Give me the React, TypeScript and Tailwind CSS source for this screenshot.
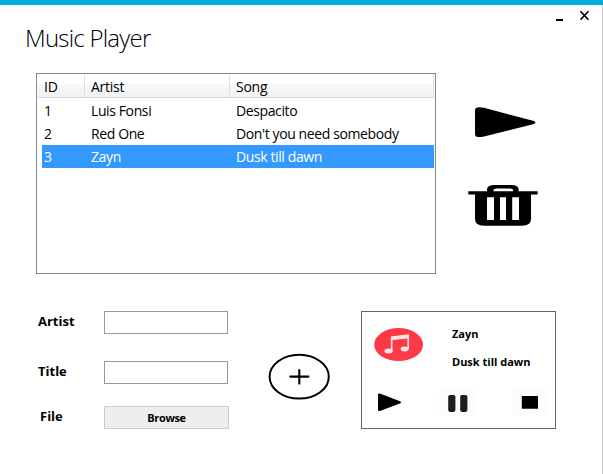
import React from "react";

const songs = [
  { id: "1", artist: "Luis Fonsi", song: "Despacito" },
  { id: "2", artist: "Red One", song: "Don't you need somebody" },
  { id: "3", artist: "Zayn", song: "Dusk till dawn" },
];

function TitleBar() {
  return (
    <header className="flex h-[68px] justify-between pl-[25px] pr-[12px]">
      <h1 className="mt-[16px] h-[34px] whitespace-nowrap text-[24px] font-light leading-[34px] tracking-[-0.78px] text-black">
        Music Player
      </h1>
      <div className="mt-[5px] flex gap-[17px]">
        <button aria-label="Minimize" className="h-[12px] w-[7px] pt-[8px]">
          <span className="block h-[2px] w-[7px] bg-black" />
        </button>
        <button aria-label="Close" className="h-[12px] w-[10px]">
          <svg width="10" height="12" viewBox="0 0 10 12">
            <path d="M0.5 1.3 8.5 9.7M8.5 1.3 0.5 9.7" stroke="#000" strokeWidth="1.6" />
          </svg>
        </button>
      </div>
    </header>
  );
}

function SongTable() {
  return (
    <div className="h-[201px] w-[400px] border border-[#828790] bg-white pl-px pr-px text-[14px] leading-[23px] text-black">
      <div className="flex h-[24px] border-b border-[#d5d5d5] bg-[linear-gradient(to_bottom,#ffffff_0px,#ffffff_10px,#f7f8fa_10px,#f1f2f4_23px)] leading-[26px] tracking-[-0.25px]">
        <div className="w-[47px] border-r border-[#e0e1e3] pl-[6px]">ID</div>
        <div className="w-[145px] border-r border-[#e0e1e3] pl-[6px]">Artist</div>
        <div className="w-[204px] border-r border-[#e0e1e3] pl-[6px]">Song</div>
      </div>
      <div className="pl-[4px] pt-px tracking-[-0.39px]">
        {songs.map((s) => (
          <div
            key={s.id}
            className={"flex h-[23px] whitespace-nowrap leading-[23px] " + (s.id === "3" ? "bg-[#3399ff] text-white" : "")}
          >
            <div className="w-[49px] pl-[2px]">{s.id}</div>
            <div className="w-[145px]">{s.artist}</div>
            <div>{s.song}</div>
          </div>
        ))}
      </div>
    </div>
  );
}

function Actions() {
  return (
    <div className="flex flex-col pl-[32px] pt-[33px]">
      <button aria-label="Play" className="ml-[7px] h-[32px] w-[62px]">
        <svg width="62" height="32" viewBox="0 0 62 32">
          <path d="M0 4.2C0 2 1.5 1.2 4.5 1.2Q6.5 1.2 9 1.8L58 14.8Q60.5 15.5 60.5 16.6T58 18.3L9 30.5Q6.5 31.1 4.5 31.1C1.5 31.1 0 30.3 0 28Z" fill="#000" />
        </svg>
      </button>
      <button aria-label="Delete" className="mt-[46px] h-[43px] w-[70px]">
        <svg width="70" height="43" viewBox="0 0 70 43">
          <path
            fill="#000"
            fillRule="evenodd"
            d="M0.3 7.3H19V5.3Q19 1 27 1H43Q50.6 1 50.6 5.3V7.3H69.6V10.4H63V35Q63 41.7 54 41.7H16Q7 41.7 7 35V10.4H0.3ZM25.5 7.3H45V6Q45 4.4 42 4.4H28.5Q25.5 4.4 25.5 6ZM19 13.2V36H26V13.2ZM32 13.2V36H38V13.2ZM44.2 13.2V36H51V13.2Z"
          />
        </svg>
      </button>
    </div>
  );
}

function SongForm() {
  return (
    <form className="w-[193px] text-[13px] font-bold text-black">
      <div className="flex h-[50px]">
        <label className="w-[68px] pl-[2px] leading-[20px]">Artist</label>
        <input aria-label="Artist" className="h-[23px] w-[124px] border border-[#999999] bg-white px-1 outline-none" />
      </div>
      <div className="flex h-[45px]">
        <label className="w-[68px] pl-[2px] leading-[20px]">Title</label>
        <input aria-label="Title" className="h-[23px] w-[124px] border border-[#999999] bg-white px-1 outline-none" />
      </div>
      <div className="flex">
        <label className="w-[68px] shrink-0 pl-[4px] leading-[20px]">File</label>
        <button type="button" className="h-[23px] w-[125px] border border-[#cccccc] bg-[#eeeeee] text-[11px] font-bold leading-[21px] tracking-[-0.35px]">
          Browse
        </button>
      </div>
    </form>
  );
}

function NowPlaying() {
  return (
    <section className="ml-[31px] flex h-[118px] w-[195px] flex-col border border-[#646464] bg-white">
      <div className="flex h-[76px] pl-[12px] pt-[16px]">
        <svg width="50" height="34" viewBox="0 0 50 34">
          <ellipse cx="24.6" cy="16.6" rx="24.4" ry="16.5" fill="#fc3944" />
          <ellipse cx="14.6" cy="23" rx="4.2" ry="2.5" fill="#ffe4e4" />
          <ellipse cx="30.6" cy="21" rx="3.9" ry="2.4" fill="#ffe4e4" />
          <path d="M17.7 23.3V9.2L34.2 7.1V21.3" fill="none" stroke="#ffe4e4" strokeWidth="1.6" />
          <path d="M16.9 8.9 35 6.7V10.2L16.9 12.3Z" fill="#ffe4e4" />
        </svg>
        <div className="ml-[28px] flex flex-col whitespace-nowrap text-[11px] font-bold leading-[14px] text-black">
          <span className="-mt-px h-[28px]">Zayn</span>
          <span>Dusk till dawn</span>
        </div>
      </div>
      <div className="flex h-[29px] pl-[15px]">
        <button aria-label="Resume" className="h-[28px] w-[26px]">
          <svg width="26" height="28" viewBox="0 0 26 28">
            <path d="M1 7Q1 5.1 3.5 5.8L23 13.3Q25 14.4 23 15.5L3.5 22.8Q1 23.7 1 21.7Z" fill="#000" />
          </svg>
        </button>
        <button aria-label="Pause" className="ml-[36px] h-[28px] w-[37px] bg-[#fcfcfc]">
          <svg width="37" height="28" viewBox="0 0 37 28">
            <rect x="9.2" y="6.9" width="7.2" height="17" rx="1.8" fill="#1d1d1b" />
            <rect x="21.2" y="6.9" width="7.2" height="17" rx="1.8" fill="#1d1d1b" />
          </svg>
        </button>
        <button aria-label="Stop" className="ml-[36px] h-[28px] w-[36px] bg-[#fcfcfc]">
          <svg width="36" height="28" viewBox="0 0 36 28">
            <rect x="9.8" y="8" width="16.2" height="12.8" rx="0.6" fill="#000" />
          </svg>
        </button>
      </div>
    </section>
  );
}

export default function App() {
  return (
    <div className="flex h-[474px] w-[603px] flex-col overflow-hidden bg-white font-['Open_Sans','Noto_Sans',sans-serif]">
      <div className="h-[5px] shrink-0 bg-[#00aedb]" />
      <main className="flex-1 border-r border-[#c3c3c3]">
        <TitleBar />
        <div className="flex pl-[36px]">
          <SongTable />
          <Actions />
        </div>
        <div className="mt-[37px] flex pl-[36px]">
          <SongForm />
          <button aria-label="Add song" className="ml-[39px] mt-[42px] h-[48px] w-[62px]">
            <svg width="62" height="48" viewBox="0 0 62 48">
              <ellipse cx="31.2" cy="23.7" rx="29.6" ry="21.9" fill="none" stroke="#000" strokeWidth="2" />
              <path d="M22.3 23.6H40.4M31.3 17V30.6" stroke="#000" strokeWidth="2.1" strokeLinecap="round" />
            </svg>
          </button>
          <NowPlaying />
        </div>
      </main>
    </div>
  );
}
